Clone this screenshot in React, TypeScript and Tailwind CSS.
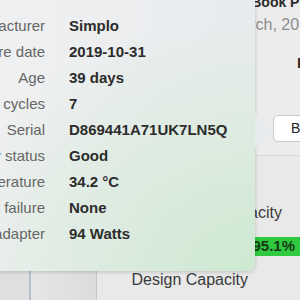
import React from 'react';

const ROWS: [string, string][] = [
  ['Manufacturer', 'Simplo'],
  ['Manufacture date', '2019-10-31'],
  ['Age', '39 days'],
  ['Charge cycles', '7'],
  ['Serial', 'D869441A71UK7LN5Q'],
  ['Battery status', 'Good'],
  ['Temperature', '34.2 °C'],
  ['Permanent failure', 'None'],
  ['Power adapter', '94 Watts'],
];

function InfoPopover() {
  return (
    <div className="absolute left-[-100px] top-[-20px] w-[355px] h-[291px]">
      <div className="h-full rounded-[7px] shadow-[0_1px_4px_rgba(0,0,0,0.18)] bg-[radial-gradient(ellipse_at_100%_100%,#cde9d0_0%,#dbebde_28%,rgba(232,236,238,0)_62%),linear-gradient(to_right,#f2f2f2,#e8ebee)] pt-[33px]">
        <div className="grid grid-cols-[145px_auto] gap-x-[24px] text-[15px] leading-[26px]">
          {ROWS.map(([label, value]) => (
            <React.Fragment key={label}>
              <span className="text-right text-[#666666] whitespace-nowrap">{label}</span>
              <span className="font-bold text-[#2c2c2c] whitespace-nowrap">{value}</span>
            </React.Fragment>
          ))}
        </div>
      </div>
      <svg className="absolute left-[355px] top-[133px]" width="17" height="34" viewBox="0 0 17 34">
        <path d="M0 0 C5 6 11 13 16 16.5 C16.8 17 16.8 17 16 17.5 C11 21 5 28 0 34 Z" fill="#e8ebee" />
      </svg>
    </div>
  );
}

export default function App() {
  return (
    <div
      className="relative w-[300px] h-[300px] overflow-hidden bg-[#ececec] flex flex-col"
      style={{ fontFamily: '"Liberation Sans", Arial, sans-serif' }}
    >
      <div className="mt-[-6px] pl-[224px] text-[14px] leading-[17px] font-bold text-[#2a2a2a] whitespace-nowrap">
        MacBook Pro (15-inch)
      </div>
      <div className="mt-[5px] pl-[228px] text-[16px] leading-[18px] text-[#8c8c8c] whitespace-nowrap">
        March, 2019
      </div>
      <div className="mt-[20px] pl-[297px] text-[15px] leading-[18px] font-bold text-[#2a2a2a] whitespace-nowrap">
        Battery
      </div>
      <div className="mt-[43px] ml-[273px] h-[27px] w-[80px] shrink-0 flex items-center pl-[17px] bg-white border border-[#c9c9c9] rounded-[5px] text-[14px] text-[#222] whitespace-nowrap">
        Battery
      </div>
      <div className="mt-[13px] h-px bg-[#f7f7f7] border-t border-[#dadada]" />
      <div className="flex-1 flex bg-[#e9e9e9]">
        <div className="w-[29px] bg-[#dfdfdf]" />
        <div className="w-[2px] bg-[#b6bfcd]" />
        <div className="w-[65px] bg-[linear-gradient(to_right,#e6e6e6,#dcdcdc)]" />
        <div className="w-px bg-[#c6c6c6]" />
        <div className="flex-1 flex flex-col">
          <div className="mt-[47px] pr-[18px] text-right text-[16px] leading-[19px] text-[#3a3a3a] whitespace-nowrap">
            Full Charge Capacity
          </div>
          <div className="mt-[15px] h-[19px] bg-[#2fca3f] flex items-center justify-end pr-[5px] text-[15px] font-bold text-[#173a17]">
            95.1%
          </div>
          <div className="mt-[14px] pr-[52px] text-right text-[16px] leading-[19px] text-[#3a3a3a] whitespace-nowrap">
            Design Capacity
          </div>
        </div>
      </div>
      <InfoPopover />
    </div>
  );
}
